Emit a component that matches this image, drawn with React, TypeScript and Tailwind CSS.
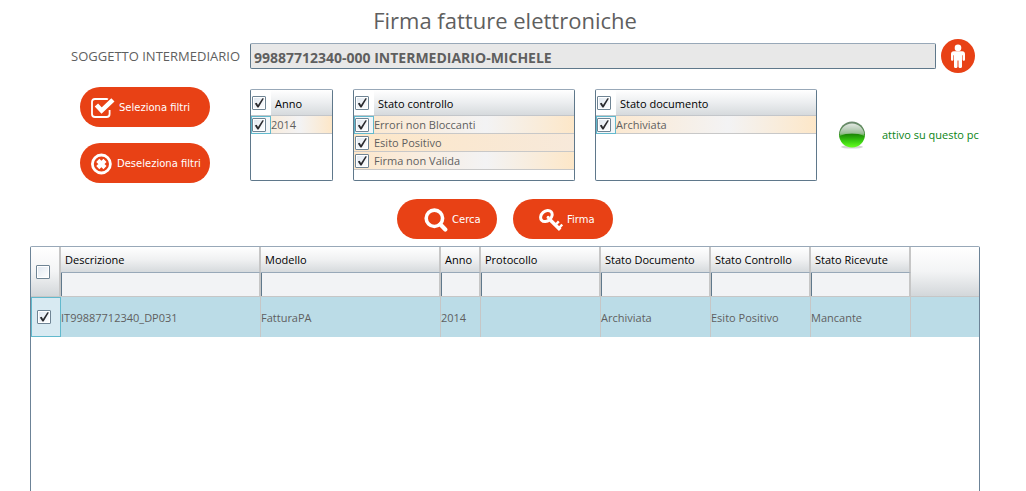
import React, { useState } from 'react'

interface FilterPanelProps {
  title: string
  options: string[]
  selected: string[]
  onChange: (selected: string[]) => void
  className: string
}

interface Column {
  key: string
  label: string
  width: number
}

const columns: Column[] = [
  { key: 'descrizione', label: 'Descrizione', width: 200 },
  { key: 'modello', label: 'Modello', width: 180 },
  { key: 'anno', label: 'Anno', width: 40 },
  { key: 'protocollo', label: 'Protocollo', width: 120 },
  { key: 'documento', label: 'Stato Documento', width: 110 },
  { key: 'controllo', label: 'Stato Controllo', width: 100 },
  { key: 'ricevute', label: 'Stato Ricevute', width: 100 },
]

const invoice: Record<string, string> = {
  descrizione: 'IT99887712340_DP031',
  modello: 'FatturaPA',
  anno: '2014',
  protocollo: '',
  documento: 'Archiviata',
  controllo: 'Esito Positivo',
  ricevute: 'Mancante',
}

const anni = ['2014']
const statiControllo = ['Errori non Bloccanti', 'Esito Positivo', 'Firma non Valida']
const statiDocumento = ['Archiviata']

const Check: React.FC<{
  label: string
  checked: boolean
  onChange: (checked: boolean) => void
}> = ({ label, checked, onChange }) => (
  <span className="relative block size-3.5 shrink-0">
    <input
      type="checkbox"
      aria-label={label}
      checked={checked}
      onChange={(e) => onChange(e.target.checked)}
      className="peer block size-3.5 appearance-none rounded-[1px] border border-[#6f8494] bg-linear-to-br from-[#dfe7f0] to-white shadow-[inset_0_0_0_1px_#fff]"
    />
    <svg
      viewBox="0 0 14 14"
      className="pointer-events-none absolute inset-0 hidden size-3.5 peer-checked:block"
    >
      <path d="M2.8 7.5 4.7 6.8 6 9 10.4 2.2 11.9 2.4 6.6 11.6 5.4 11.6Z" fill="#2b2b2f" />
    </svg>
  </span>
)

const FilterPanel: React.FC<FilterPanelProps> = ({
  title,
  options,
  selected,
  onChange,
  className,
}) => {
  const toggle = (option: string, on: boolean) =>
    onChange(on ? [...selected, option] : selected.filter((o) => o !== option))

  return (
    <fieldset
      aria-label={title}
      className={`h-[92px] min-w-0 overflow-hidden rounded-xs border border-[#5f788b] border-t-[#98a8b8] ${className}`}
    >
      <div className="flex h-[26px] items-center border-b border-[#c3c6ca] bg-linear-to-b from-white via-[#eceef0] to-[#d6dadd]">
        <div className="flex h-full w-5 items-center bg-white pt-px pl-px">
          <Check
            label={title}
            checked={selected.length === options.length}
            onChange={(on) => onChange(on ? options : [])}
          />
        </div>
        <span className="pt-0.5 pl-1 text-[11px] leading-4 text-black">{title}</span>
      </div>
      {options.map((option, i) => (
        <div
          key={option}
          className={`flex h-[18px] items-center border-b border-[#c8c8c8] ${
            i % 2
              ? 'bg-linear-to-r from-[#fde7c8] to-[#f7e9da]'
              : 'bg-linear-to-r from-[#fde7cb] via-[#f3f3f4] via-60% to-[#fde7c8]'
          }`}
        >
          <div
            className={`flex h-[18px] w-5 shrink-0 items-center ${
              i === 0 ? 'border border-[#62b9cd] bg-[#f3f6f8]' : 'border border-transparent'
            }`}
          >
            <Check
              label={option}
              checked={selected.includes(option)}
              onChange={(on) => toggle(option, on)}
            />
          </div>
          <span className="text-[11px] leading-4">{option}</span>
        </div>
      ))}
    </fieldset>
  )
}

const PillButton: React.FC<{
  children: React.ReactNode
  className: string
  onClick?: () => void
}> = ({ children, className, onClick }) => (
  <button
    type="button"
    onClick={onClick}
    className={`flex h-10 items-center bg-[#e84115] pt-px font-["DejaVu_Sans",Verdana,sans-serif] text-[10px] leading-4 whitespace-nowrap text-white hover:bg-[#d63a11] ${className}`}
  >
    {children}
  </button>
)

const SelectIcon = () => (
  <svg viewBox="0 0 24 22" className="h-[22px] w-6 shrink-0" fill="none" stroke="#fff">
    <path d="M17 2.2C16.6 2 16.2 2 15.5 2H4C2 2 1 3 1 4.8V17C1 19 2 20 4 20H15.5C17.5 20 18.6 19 18.6 17V13" strokeWidth="1.8" />
    <path d="M5.4 8 10.6 13.6 21.9 2.8" strokeWidth="4.6" />
  </svg>
)

const DeselectIcon = () => (
  <svg viewBox="0 0 22 22" className="size-[22px] shrink-0" fill="none" stroke="#fff">
    <circle cx="10.4" cy="11" r="9" strokeWidth="2.8" />
    <path d="m6.8 7.4 7.2 7.2m0-7.2-7.2 7.2" strokeWidth="4.4" />
  </svg>
)

const SearchIcon = () => (
  <svg viewBox="0 0 24 24" className="size-6 shrink-0" fill="none" stroke="#fff">
    <circle cx="10.4" cy="10.3" r="8.2" strokeWidth="3.6" />
    <path d="m16.5 16.5 4.8 5" strokeWidth="4.2" strokeLinecap="round" />
  </svg>
)

const KeyIcon = () => (
  <svg viewBox="0 0 24 24" className="size-6 shrink-0" fill="none" stroke="#fff">
    <ellipse
      cx="7.4"
      cy="8"
      rx="6.4"
      ry="4.9"
      strokeWidth="3"
      transform="rotate(-42 7.4 8)"
    />
    <circle cx="9.2" cy="9.4" r="1.6" fill="#fff" stroke="none" />
    <path d="M10.5 11.2 21.2 21.8" strokeWidth="3.6" />
    <path d="m16.4 17 3.4-3.6M19.8 20.2l3.4-3.6" strokeWidth="2.4" />
  </svg>
)

const PersonIcon = () => (
  <svg viewBox="0 0 34 34" className="size-[34px]" fill="#fff">
    <circle cx="17" cy="8.9" r="3.3" />
    <path d="M12.8 12.2H21.2C23 12.2 24 13.4 24 15V20.4C24 22.1 21.6 22.1 21.6 20.4V16.2H21V27.5C21 29.5 17.5 29.5 17.5 27.5V21.5H16.5V27.5C16.5 29.5 13 29.5 13 27.5V16.2H12.4V20.4C12.4 22.1 10 22.1 10 20.4V15C10 13.4 11 12.2 12.8 12.2Z" />
  </svg>
)

const StatusLed = () => (
  <svg viewBox="0 0 28 28" className="size-7 shrink-0">
    <defs>
      <linearGradient id="led" x1="0" y1="0" x2="0" y2="1">
        <stop offset="0" stopColor="#6f8a72" />
        <stop offset="0.45" stopColor="#4c8a45" />
        <stop offset="0.5" stopColor="#1e8a08" />
        <stop offset="0.75" stopColor="#38cc10" />
        <stop offset="1" stopColor="#66ff20" />
      </linearGradient>
      <linearGradient id="gloss" x1="0" y1="0" x2="0" y2="1">
        <stop offset="0" stopColor="#fff" stopOpacity="0.8" />
        <stop offset="1" stopColor="#fff" stopOpacity="0.35" />
      </linearGradient>
    </defs>
    <ellipse cx="14" cy="26" rx="11" ry="1.6" fill="#d4d4d4" />
    <circle cx="14" cy="13.5" r="13" fill="url(#led)" />
    <path d="M1.6 14.8A12.4 12.4 0 0 1 26.4 14.8Q14 10.4 1.6 14.8Z" fill="url(#gloss)" />
  </svg>
)

export default function App() {
  const [anno, setAnno] = useState(anni)
  const [controllo, setControllo] = useState(statiControllo)
  const [documento, setDocumento] = useState(statiDocumento)
  const [rowChecked, setRowChecked] = useState(true)
  const [allChecked, setAllChecked] = useState(false)

  const selectAll = () => {
    setAnno(anni)
    setControllo(statiControllo)
    setDocumento(statiDocumento)
  }

  const clearAll = () => {
    setAnno([])
    setControllo([])
    setDocumento([])
  }

  return (
    <main className='flex h-screen flex-col overflow-hidden bg-white pr-[46px] pl-[30px] font-["Open_Sans",sans-serif] text-[#5f5f5f]'>
      <h1 className="pt-1 text-center text-[22px] leading-8">Firma fatture elettroniche</h1>

      {/* Intermediary */}
      <div className="mt-[3px] flex items-center">
        <label
          htmlFor="soggetto"
          className="w-[220px] shrink-0 pr-2.5 text-right text-[13px] leading-5 whitespace-nowrap"
        >
          SOGGETTO INTERMEDIARIO
        </label>
        <input
          id="soggetto"
          readOnly
          value="99887712340-000 INTERMEDIARIO-MICHELE"
          className="h-[26px] min-w-0 flex-1 rounded-xs border border-[#5f788b] border-t-[#98a8b8] bg-[#e8e8e8] px-[3px] pt-0.5 text-[14px] font-bold"
        />
        <button
          type="button"
          aria-label="Soggetto"
          className="mr-[5px] ml-[5px] size-[34px] rounded-full bg-[#e84115]"
        >
          <PersonIcon />
        </button>
      </div>

      {/* Filters */}
      <div className="mt-3.5 flex items-start">
        <div className="ml-[50px] flex w-[130px] shrink-0 flex-col gap-4">
          <PillButton className="gap-1 rounded-[20px] pl-[11px]" onClick={selectAll}>
            <SelectIcon />
            Seleziona filtri
          </PillButton>
          <PillButton className="gap-1 rounded-[20px] pl-[11px]" onClick={clearAll}>
            <DeselectIcon />
            Deseleziona filtri
          </PillButton>
        </div>
        <div className="mt-0.5 ml-10 flex min-w-0 flex-1 gap-5">
          <FilterPanel title="Anno" options={anni} selected={anno} onChange={setAnno} className="w-[83px]" />
          <FilterPanel
            title="Stato controllo"
            options={statiControllo}
            selected={controllo}
            onChange={setControllo}
            className="w-[222px]"
          />
          <FilterPanel
            title="Stato documento"
            options={statiDocumento}
            selected={documento}
            onChange={setDocumento}
            className="w-[222px]"
          />
          <div className="flex h-[92px] items-center gap-4 pl-px">
            <StatusLed />
            <span className="text-[11px] leading-4 whitespace-nowrap text-[#0a8414]">
              attivo su questo pc
            </span>
          </div>
        </div>
      </div>

      <div className="mt-4 flex justify-center gap-4">
        <PillButton className="w-[100px] gap-1 rounded-[20px] pl-[27px]">
          <SearchIcon />
          Cerca
        </PillButton>
        <PillButton className="w-[100px] gap-1 rounded-[20px] pl-[26px]">
          <KeyIcon />
          Firma
        </PillButton>
      </div>

      {/* Invoices */}
      <div className="mt-[7px] min-h-0 flex-1 overflow-hidden rounded-t-xs border border-b-0 border-[#6c8397] border-t-[#98a8b8]">
        <table className="w-full table-fixed border-separate border-spacing-0 text-left text-[11px] leading-4">
          <colgroup>
            <col className="w-[30px]" />
            {columns.map((col) => (
              <col key={col.key} style={{ width: col.width }} />
            ))}
            <col />
          </colgroup>
          <thead>
            <tr className="h-[26px]">
              <th
                rowSpan={2}
                className="border-r-2 border-b border-r-[#c6c6c6] border-b-[#c6c6c6] bg-linear-to-b from-white via-[#f3f4f5] to-[#d3d7da] p-0 pl-[5px]"
              >
                <Check label="Seleziona tutto" checked={allChecked} onChange={setAllChecked} />
              </th>
              {columns.map((col) => (
                <th
                  key={col.key}
                  className="border-r-2 border-b border-r-[#c6c6c6] border-b-[#98a8b8] bg-linear-to-b from-white via-[#f0f1f2] to-[#d6dadd] p-0 pl-1 font-normal whitespace-nowrap text-black"
                >
                  {col.label}
                </th>
              ))}
              <th
                rowSpan={2}
                className="border-b border-[#c6c6c6] bg-linear-to-b from-white via-[#f3f4f5] to-[#d3d7da] p-0"
              />
            </tr>
            <tr className="h-6">
              {columns.map((col) => (
                <th key={col.key} className="border-r-2 border-b border-[#c6c6c6] p-0">
                  <input
                    type="text"
                    aria-label={`Filtra ${col.label}`}
                    className="block h-[23px] w-full border-l border-[#5f788b] bg-[#f2f3f5] px-1 font-normal"
                  />
                </th>
              ))}
            </tr>
          </thead>
          <tbody>
            <tr className="h-10 bg-[#bbdce7]">
              <td className="border border-[#62b9cd] bg-[#d8eaf2] p-0 pl-[5px]">
                <Check label={invoice.descrizione} checked={rowChecked} onChange={setRowChecked} />
              </td>
              {columns.map((col) => (
                <td key={col.key} className="border-r border-[#c6c6c6] p-0 pt-0.5 whitespace-nowrap">
                  {invoice[col.key]}
                </td>
              ))}
              <td className="p-0" />
            </tr>
          </tbody>
        </table>
      </div>
    </main>
  )
}
